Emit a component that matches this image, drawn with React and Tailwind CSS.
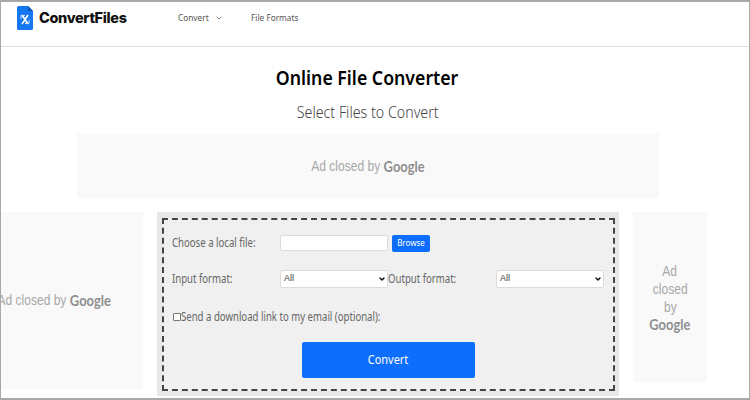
import { ChevronDown } from 'lucide-react'

function Logo() {
  return (
    <svg width="16" height="24" viewBox="0 0 16 24">
      <path d="M1.5 0H11L16 5V22.5Q16 24 14.5 24H1.5Q0 24 0 22.5V1.5Q0 0 1.5 0Z" fill="#1577f2" />
      <path d="M11 0L16 5H11Z" fill="#0b56b8" />
      <path d="M5 9L11 18M11 9L5 18" stroke="#fff" strokeWidth="1.6" fill="none" />
      <path d="M4 13V9.5H8M12 14V17.5H8" stroke="#cfe3fb" strokeWidth="1" fill="none" />
    </svg>
  )
}

function AdClosed({ className, children }) {
  return <div className={`bg-[#f9f9f9] text-[#a8a8a8] font-['Liberation_Sans',sans-serif] overflow-hidden ${className}`}>{children}</div>
}

function Google({ className }) {
  return <span className={`font-['Lato',sans-serif] font-bold text-[#8f8f8f] ${className}`}>Google</span>
}

function FormatSelect() {
  return (
    <div className="w-[108px] h-[18px] bg-white rounded-[2px] border border-[#dcdcdc] flex items-center justify-between pl-[3px] pr-[1px] font-['Liberation_Sans',sans-serif] text-[9px] text-[#444]">
      <span>All</span>
      <ChevronDown size={8} strokeWidth={4} className="text-black" />
    </div>
  )
}

export default function App() {
  return (
    <div className="w-[750px] h-[400px] overflow-hidden bg-white border-t-2 border-l border-r border-b-2 border-[#a8a8a8] font-['Noto_Sans',sans-serif] flex flex-col">
      {/* Header */}
      <header className="h-[45px] shrink-0 border-b border-[#dedede] flex items-start">
        <div className="flex items-center gap-[6px] ml-[16px] mt-[4px]">
          <Logo />
          <span className="font-['Inter',sans-serif] font-extrabold text-[14.5px] tracking-[-0.35px] text-[#111]">ConvertFiles</span>
        </div>
        <nav className="flex items-center text-[9px] text-[#555] ml-[51px] mt-[9px]">
          <span className="w-[31px] scale-x-[0.92] origin-left whitespace-nowrap">Convert</span>
          <ChevronDown size={8} strokeWidth={2} className="ml-[6px] text-[#444]" />
          <span className="ml-[28px] scale-x-[0.92] origin-left whitespace-nowrap">File Formats</span>
        </nav>
      </header>

      <main className="flex flex-col items-center pr-[14px]">
        <h1 className="mt-[16px] h-[30px] leading-[30px] text-[20px] font-semibold text-black scale-x-[0.885] -translate-x-px">Online File Converter</h1>
        <h2 className="mt-[7px] h-[24px] leading-[24px] text-[16px] font-light text-[#444] scale-x-[0.89]">Select Files to Convert</h2>
        <AdClosed className="mt-[10px] w-[582px] h-[64px] flex items-center justify-center text-[14px]">
          <div className="flex items-center gap-[4px] scale-x-[0.86]">
            <span>Ad closed by</span>
            <Google className="text-[15px]" />
          </div>
        </AdClosed>
      </main>

      <section className="flex items-start mt-[14px] -ml-px">
        <AdClosed className="w-[143px] h-[177px] shrink-0 flex items-center justify-end pr-[32px] text-[14px] whitespace-nowrap">
          <div className="flex items-center gap-[4px] scale-x-[0.86] origin-right shrink-0">
            <span>Ad closed by</span>
            <Google className="text-[15px]" />
          </div>
        </AdClosed>

        <div className="ml-[14px] w-[462px] h-[184px] shrink-0 bg-[#f0f0f0] border-l-[5px] border-r-[4px] border-t-[6px] border-b-[5px] border-[#e8e8e8]">
          <div className="h-full border-2 border-dashed border-[#444] px-[8px] text-[12px] text-[#666]">
            <div className="flex items-center mt-[14px] h-[18px]">
              <span className="w-[108px] scale-x-[0.8] origin-left whitespace-nowrap">Choose a local file:</span>
              <div className="w-[108px] h-[16px] bg-white rounded-[2px] border border-[#dcdcdc]" />
              <button className="ml-[4px] w-[38px] h-[17px] bg-[#0d6efd] rounded-[2px] text-white text-[8px]">Browse</button>
            </div>
            <div className="flex items-center mt-[18px] h-[18px]">
              <span className="w-[108px] scale-x-[0.8] origin-left whitespace-nowrap">Input format:</span>
              <FormatSelect />
              <span className="w-[108px] scale-x-[0.8] origin-left whitespace-nowrap">Output format:</span>
              <FormatSelect />
            </div>
            <div className="flex items-center mt-[20px] h-[18px]">
              <span className="ml-px w-[8px] h-[8px] bg-white border border-[#777] rounded-[1px]" />
              <span className="scale-x-[0.8] origin-left whitespace-nowrap">Send a download link to my email (optional):</span>
            </div>
            <div className="flex justify-center mt-[16px]">
              <button className="w-[173px] h-[36px] bg-[#0d6efd] rounded-[2px] text-white text-[13px]">
                <span className="inline-block scale-x-[0.84]">Convert</span>
              </button>
            </div>
          </div>
        </div>

        <AdClosed className="ml-[14px] w-[74px] h-[170px] shrink-0 flex flex-col items-center justify-center text-[14px] leading-[18px] text-center">
          <span className="scale-x-[0.86]">Ad</span>
          <span className="scale-x-[0.86]">closed</span>
          <span className="scale-x-[0.86]">by</span>
          <Google className="text-[15px] leading-[17px] scale-x-[0.86]" />
        </AdClosed>
      </section>
    </div>
  )
}
